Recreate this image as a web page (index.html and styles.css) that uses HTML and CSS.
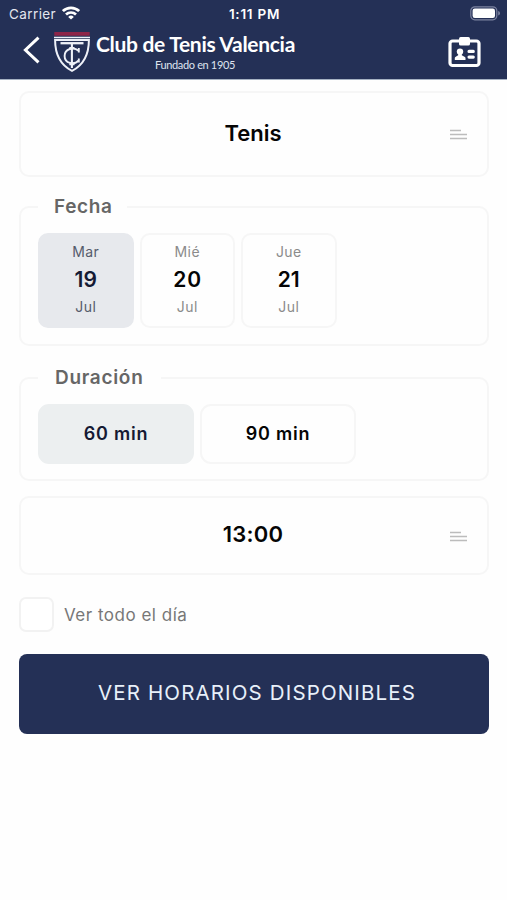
FILE: index.html
```html
<!DOCTYPE html>
<html lang="es">
<head>
<meta charset="utf-8">
<title>Club de Tenis Valencia</title>
<link rel="stylesheet" href="styles.css">
</head>
<body>
<header class="top">
  <div class="status">
    <div class="carrier"><span>Carrier</span>
      <svg width="18" height="14" viewBox="0 0 18 14" fill="none" stroke="#fff" stroke-width="2.7"><path d="M.9 5.1a11.6 11.6 0 0 1 16.2 0M4 8.5a7.2 7.2 0 0 1 10 0"/><path d="M9 13.6 6.2 10.9a4 4 0 0 1 5.6 0z" fill="#fff" stroke="none"/></svg>
    </div>
    <span class="clock">1:11 PM</span>
    <svg class="battery" width="31" height="15" viewBox="0 0 31 15"><rect x=".8" y=".8" width="26" height="13" rx="4" fill="none" stroke="#7c83a0" stroke-width="1.2"/><rect x="2.6" y="2.6" width="22.4" height="9.4" rx="2.2" fill="#fff"/><path d="M28.2 5v4.6q1.8-.6 1.8-2.3T28.2 5z" fill="#7c83a0"/></svg>
  </div>
  <div class="nav">
    <svg class="back" width="18" height="28" viewBox="0 0 18 28" fill="none" stroke="#fff" stroke-width="3"><path d="M16.5 1.6 3.4 14l13.1 12.4"/></svg>
    <svg class="crest" width="38" height="42" viewBox="0 0 38 42" fill="none" stroke="#eef1f8">
      <path d="M1.3 0h35.4v3.8H1.3z" fill="#8d2548" stroke="none"/>
      <path d="M1 5.6h36" stroke-width="1.5"/>
      <path d="M2.1 8C2.1 21 6.5 32.5 19 38.9 31.5 32.5 35.9 21 35.9 8z" stroke-width="2"/>
      <path d="M7.5 11.2h23" stroke-width="2.3"/>
      <path d="M18.9 11v25M16.3 16h5.2M16.3 32.3h5.2" stroke-width="2.1"/>
      <path d="M25.6 18.8c-5-4.4-14-2.2-14 5.2s9.5 9.6 14 4.3M25.8 16v4.6M25.8 26.5v4" stroke-width="1.9"/>
    </svg>
    <div class="brand"><span class="name">Club de Tenis Valencia</span><span class="since">Fundado en 1905</span></div>
    <svg class="card-icon" width="33" height="32" viewBox="0 0 33 32"><rect x="2" y="5" width="29" height="24.5" rx="2.6" fill="none" stroke="#fff" stroke-width="3.2"/><rect x="11" y="1" width="11" height="8.6" rx="1.7" fill="#fff"/><circle cx="12" cy="15.6" r="3.2" fill="#fff"/><path d="M10.2 17h3.6v2.3l3.1 1.6q.6.4.6 1.2v1.8H6.8v-1.8q0-.8.6-1.2l2.8-1.6z" fill="#fff"/><path d="M21 15.4h4.3M21 21.1h4.3" stroke="#fff" stroke-width="3.1" stroke-linecap="round"/></svg>
  </div>
</header>
<main class="form">
  <div class="select sport"><span class="sport-text">Tenis</span>
    <svg class="lines" width="17" height="12" viewBox="0 0 17 12" stroke="#bcbcbc" stroke-width="1.7"><path d="M0 1.5h11M0 5.5h17M0 9.5h17"/></svg></div>
  <section class="group dates">
    <h2 class="legend">Fecha</h2>
    <div class="options">
      <div class="day chosen"><span class="small">Mar</span><b>19</b><span class="small">Jul</span></div>
      <div class="day"><span class="small">Mié</span><b class="wide">20</b><span class="small">Jul</span></div>
      <div class="day"><span class="small">Jue</span><b>21</b><span class="small">Jul</span></div>
    </div>
  </section>
  <section class="group lengths">
    <h2 class="legend">Duración</h2>
    <div class="options">
      <div class="length chosen">60 min</div>
      <div class="length">90 min</div>
    </div>
  </section>
  <div class="select hour"><span class="hour-text">13:00</span>
    <svg class="lines" width="17" height="12" viewBox="0 0 17 12" stroke="#bcbcbc" stroke-width="1.7"><path d="M0 1.5h11M0 5.5h17M0 9.5h17"/></svg></div>
  <label class="all-day"><span class="box"></span><span class="all-day-text">Ver todo el día</span></label>
  <button class="submit">VER HORARIOS DISPONIBLES</button>
</main>
</body>
</html>
```
FILE: styles.css
```css
* { box-sizing: border-box; }
body { margin: 0; background: #fefefe; color: #050505; font-family: Inter, sans-serif; }
.top { height: 80px; background: #243056; border-bottom: 1px solid #a5b1c2; color: #fff; }
.status { height: 28px; padding: 0 7px 0 9px; display: grid; grid-template-columns: 1fr auto 1fr; align-items: center; font-size: 13.5px; line-height: 28px; }
.carrier { display: flex; align-items: center; gap: 6px; color: #e3e6ee; letter-spacing: .4px; }
.carrier svg { margin-top: -3px; }
.clock { font-weight: 600; letter-spacing: .75px; }
.battery { justify-self: end; margin-right: -1px; margin-top: -1px; }
.nav { height: 51px; display: flex; align-items: flex-start; padding-left: 22px; padding-right: 26px; }
.back { margin-top: 8px; }
.crest { margin: 4px 0 0 13px; }
.brand { width: 200px; margin: 3px 0 0 5px; display: flex; flex-direction: column; font-family: Lato, sans-serif; white-space: nowrap; }
.name { font-size: 21px; line-height: 26px; font-weight: 700; letter-spacing: -.3px; }
.since { align-self: center; font-size: 11px; line-height: 14px; margin: 1px 0 0 -2px; letter-spacing: -.35px; color: #dfe4ef; }
.card-icon { margin: 8px 0 0 auto; }
.form { padding: 11px 18px 0 19px; display: flex; flex-direction: column; }
.select { border: 2px solid #f6f6f6; border-radius: 10px; position: relative; display: flex; align-items: center; justify-content: center; font-size: 22px; font-weight: 600; }
.sport { height: 86px; }
.hour { height: 79px; margin-top: 15px; }
.sport-text { margin: -2px 0 0 -2px; }
.hour-text { margin: -3px 0 0 -2px; letter-spacing: .2px; }
.lines { position: absolute; right: 20px; top: 50%; margin-top: -5px; }
.group { border: 2px solid #f6f6f6; border-radius: 10px; padding: 0 17px; display: flex; flex-direction: column; align-items: flex-start; }
.dates { height: 140px; margin-top: 29px; }
.lengths { height: 104px; margin-top: 31px; }
.legend { height: 26px; margin: -14px 0 0; padding: 0 16px; background: #fefefe; color: #666; font-size: 19px; line-height: 26px; font-weight: 600; }
.dates .legend { padding-right: 15px; letter-spacing: .6px; }
.lengths .legend { padding-left: 17px; padding-right: 18px; letter-spacing: .7px; }
.options { display: flex; gap: 6px; margin-top: 13px; }
.day { width: 95.5px; height: 95px; border: 2px solid #f6f6f6; border-radius: 10px; display: flex; flex-direction: column; align-items: center; padding-top: 7px; }
.small { font-size: 14px; line-height: 19px; color: #8b8b8b; letter-spacing: .4px; }
.day b { font-size: 21px; line-height: 35px; padding-top: 1px; font-weight: 600; }
.chosen.day { background: #e7e9ed; border-color: #e7e9ed; color: #151a34; }
.chosen .small { color: #555b6b; }
.day .wide { letter-spacing: 1px; margin-right: -1px; }
.length { width: 156px; height: 60px; border: 2px solid #f6f6f6; border-radius: 11px; display: flex; align-items: center; justify-content: center; padding-bottom: 2px; font-size: 18px; font-weight: 600; letter-spacing: .8px; }
.length.chosen { background: #eceff0; border-color: #eceff0; color: #151a34; }
.all-day { display: flex; align-items: center; gap: 10px; margin-top: 22px; height: 35px; }
.box { width: 35px; height: 35px; border: 2px solid #f2f2f2; border-radius: 7px; background: #fff; }
.all-day-text { color: #777; font-size: 17px; letter-spacing: .5px; }
.submit { height: 80px; margin-top: 22px; padding: 0 0 3px 6px; border: 0; border-radius: 8px; background: #243056; color: #e8f0fa; font: 400 20.5px Inter, sans-serif; letter-spacing: 1.15px; }
```
